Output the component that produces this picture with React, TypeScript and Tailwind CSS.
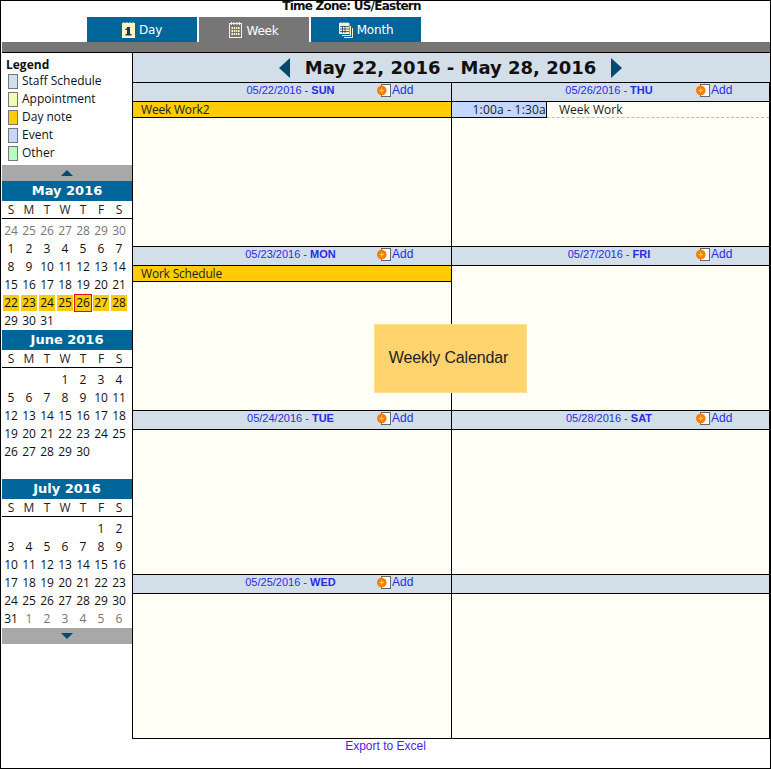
const font = "font-['Liberation_Sans',sans-serif]";

function AddIcon() {
  return (
    <svg width="14" height="14" viewBox="0 0 14 14" className="shrink-0">
      <rect x="4.500" y="1.500" width="9" height="12" fill="#fff" stroke="#666" />
      <circle cx="4.800" cy="7.500" r="4.800" fill="#f97c10" />
      <path d="M4.800 5.300v4.400M2.600 7.500h4.400" stroke="#ffd24a" strokeWidth="1" />
    </svg>
  );
}

function DayIcon() {
  return (
    <svg width="13" height="16" viewBox="0 0 13 16" className="shrink-0">
      <rect y="1" width="13" height="15" fill="#fdf3c4" />
      <path d="M2 0v2M5 0v2M8 0v2M11 0v2" stroke="#fdf3c4" />
      <path d="M5 5h3v8H5zM3.500 6.500H5V8H3.500zM3.500 12h6v1.500h-6z" fill="#1c3a50" />
    </svg>
  );
}

function WeekIcon() {
  return (
    <svg width="13" height="16" viewBox="0 0 13 16" className="shrink-0">
      <rect x=".5" y="1.500" width="12" height="14" fill="none" stroke="#fdf3c4" />
      <path d="M2.500 0v3M5 0v3M8 0v3M10.500 0v3" stroke="#fdf3c4" />
      <path d="M2.500 5h8v2h-8zM2.500 8h8v2h-8zM2.500 11h8v2h-8z" fill="#fdf3c4" />
      <path d="M4.500 5v8M6.500 5v8M8.500 5v8" stroke="#767676" strokeWidth=".8" />
    </svg>
  );
}

function MonthIcon() {
  return (
    <svg width="14" height="16" viewBox="0 0 14 16" className="shrink-0">
      <path d="M11.500 4v9.500H3M13.500 6v9.500H5" fill="none" stroke="#fdf3c4" />
      <rect x=".5" y="1.500" width="9.500" height="10" fill="#fdf3c4" stroke="#fdf3c4" />
      <path d="M2 0v2M5 0v2M8 0v2" stroke="#fdf3c4" />
      <path d="M1 4.500h9M1 7h9M1 9.500h9M3.500 4v7M6 4v7" stroke="#036" strokeWidth=".7" />
    </svg>
  );
}

function Tab({ label, active, icon }: { label: string; active?: boolean; icon: React.ReactNode }) {
  return (
    <div
      className={`flex h-[25px] w-[110px] items-center justify-center gap-[4px] text-[12px] tracking-[-0.2px] text-white font-['DejaVu_Sans',sans-serif] ${
        active ? 'bg-[#767676]' : 'bg-[#006699]'
      }`}
    >
      {icon}
      <span className={active ? 'pt-[2px]' : ''}>{label}</span>
    </div>
  );
}

const legend = [
  ['Staff Schedule', 'bg-[#d3dfe8]'],
  ['Appointment', 'bg-[#eeffb8]'],
  ['Day note', 'bg-[#ffcc05]'],
  ['Event', 'bg-[#c3d7ff]'],
  ['Other', 'bg-[#b4ffc0]'],
];

type D = { n: string; dim?: boolean; note?: boolean; today?: boolean };

function MiniMonth({ title, days, gap }: { title: string; days: D[]; gap?: boolean }) {
  return (
    <div>
      <div className="flex h-[20px] items-center justify-center bg-[#006699] pb-[1px] text-[13px] font-bold text-white font-['DejaVu_Sans',sans-serif]">
        {title}
      </div>
      <div className="grid h-[18px] grid-cols-[repeat(7,18px)] items-center justify-start border-b border-black text-center text-[12px] text-[#222] font-['Open_Sans',sans-serif]">
        {['S', 'M', 'T', 'W', 'T', 'F', 'S'].map((d, i) => (
          <span key={i}>{d}</span>
        ))}
      </div>
      <div className={`grid grid-cols-[repeat(7,18px)] content-start justify-start pt-[3px] text-center text-[12px] leading-[18px] ${gap ? 'h-[111px]' : ''} font-['Open_Sans',sans-serif]`}>
        {days.map((d, i) => (
          <div key={i} className="flex h-[18px] items-center justify-center">
            <span
              className={`flex h-[16px] w-[16px] items-center justify-center ${d.dim ? 'text-[#777]' : 'text-[#111]'} ${
                d.note ? 'bg-[#ffcc05]' : ''
              } ${d.today ? 'box-content border border-[#e01010]' : ''}`}
            >
              {d.n}
            </span>
          </div>
        ))}
      </div>
    </div>
  );
}

const range = (a: number, b: number, o: Partial<D> = {}): D[] =>
  Array.from({ length: b - a + 1 }, (_, i) => ({ n: String(a + i), ...o }));
const blank = (k: number): D[] => Array.from({ length: k }, () => ({ n: '' }));

const may: D[] = [
  ...range(24, 30, { dim: true }),
  ...range(1, 21),
  ...range(22, 25, { note: true }),
  { n: '26', note: true, today: true },
  ...range(27, 28, { note: true }),
  ...range(29, 31),
];
const june: D[] = [...blank(3), ...range(1, 30)];
const july: D[] = [...blank(5), ...range(1, 31), ...range(1, 6, { dim: true })];

function Scroller({ down }: { down?: boolean }) {
  return (
    <div className="flex h-[16px] items-center justify-center bg-[#a8a8a8]">
      <svg width="12" height="6" viewBox="0 0 12 6">
        <path d={down ? 'M0 0h12L6 6z' : 'M0 6h12L6 0z'} fill="#004a70" />
      </svg>
    </div>
  );
}

function DayCell({ date, day, children }: { date?: string; day?: string; children?: React.ReactNode }) {
  return (
    <div className="flex h-[164px] flex-col border-t border-black">
      <div className={`relative flex h-[19px] shrink-0 items-center justify-center border-b border-black bg-[#d3dfe8] pb-[4px] text-[11px] text-[#2a2ae8] ${font}`}>
        {date && (
          <>
            <span className="pr-[3px]">
              {date} - <b className="font-bold">{day}</b>
            </span>
            <span className="absolute left-[244px] top-0 flex h-[14px] items-center gap-[1px] text-[12px] text-[#2a2ae8]">
              <AddIcon />
              <span className="-mt-[1px]">Add</span>
            </span>
          </>
        )}
      </div>
      <div className="flex-1 bg-[#fffff5]">{children}</div>
    </div>
  );
}

function Note({ text }: { text: string }) {
  return (
    <div className="h-[16px] border-b border-black bg-[#ffcc05] pl-[8px] text-[12px] leading-[15px] tracking-[-0.2px] text-[#222] font-['Open_Sans',sans-serif]">
      {text}
    </div>
  );
}

export default function App() {
  return (
    <div className="relative h-[769px] w-[771px] overflow-hidden border border-black bg-white">
      <div className="h-[16px] pr-[68px] text-center text-[12px] font-bold leading-[10px] tracking-[-0.75px] text-[#111] font-['DejaVu_Sans',sans-serif]">
        Time Zone: US/Eastern
      </div>
      <div className="flex gap-[2px] pl-[86px]">
        <Tab label="Day" icon={<DayIcon />} />
        <Tab label="Week" active icon={<WeekIcon />} />
        <Tab label="Month" icon={<MonthIcon />} />
      </div>
      <div className="ml-[1px] h-[10px] bg-[#767676]" />
      <div className="ml-[1px] flex border-t border-black">
        <aside className="w-[130px] shrink-0 text-[#111] font-['Open_Sans',sans-serif]">
          <div className="h-[112px] pl-[4px] pt-[4px] text-[12px]">
            <div className="h-[15px] text-[12px] font-bold leading-[15px] text-[#111]">Legend</div>
            {legend.map(([t, c]) => (
              <div key={t} className="flex h-[18px] items-center gap-[4px] pl-[2px]">
                <span className={`h-[15px] w-[10px] border border-[#777] ${c}`} />
                <span>{t}</span>
              </div>
            ))}
          </div>
          <Scroller />
          <MiniMonth title="May 2016" days={may} />
          <MiniMonth title="June 2016" days={june} gap />
          <MiniMonth title="July 2016" days={july} />
          <Scroller down />
        </aside>
        <main className="flex-1 border-l border-black">
          <div className="flex h-[29px] items-center justify-center gap-[15px] bg-[#d3dfe8] pr-[2px]">
            <svg width="11" height="20" viewBox="0 0 11 20"><path d="M11 0v20L0 10z" fill="#004a70" /></svg>
            <span className="text-[18px] font-bold text-[#111] font-['DejaVu_Sans',sans-serif]">May 22, 2016 - May 28, 2016</span>
            <svg width="11" height="20" viewBox="0 0 11 20"><path d="M0 0v20L11 10z" fill="#004a70" /></svg>
          </div>
          <div className="grid w-[637px] grid-cols-[319px_317px] border-b border-r border-black">
            <div className="border-r border-black">
              <DayCell date="05/22/2016" day="SUN"><Note text="Week Work2" /></DayCell>
              <DayCell date="05/23/2016" day="MON"><Note text="Work Schedule" /></DayCell>
              <DayCell date="05/24/2016" day="TUE" />
              <DayCell date="05/25/2016" day="WED" />
            </div>
            <div>
              <DayCell date="05/26/2016" day="THU">
                <div className="flex h-[16px] border-b border-dashed border-[#bbb] text-[12px] leading-[15px] text-[#222] font-['Open_Sans',sans-serif]">
                  <div className="h-[16px] w-[95px] border-b border-r border-black bg-[#c3d7ff] text-right tracking-[0.2px]">1:00a - 1:30a</div>
                  <div className="pl-[12px]">Week Work</div>
                </div>
              </DayCell>
              <DayCell date="05/27/2016" day="FRI" />
              <DayCell date="05/28/2016" day="SAT" />
              <DayCell />
            </div>
          </div>
        </main>
      </div>
      <div className={`text-center text-[12px] leading-[15px] text-[#4a1ee8] ${font}`}>Export to Excel</div>
      <div className={`absolute left-[373px] top-[323px] flex h-[69px] w-[153px] items-center justify-center border border-[#ffdf94] bg-[#ffd36e] pb-[1px] pr-[4px] text-[16px] tracking-[-0.15px] text-[#222] ${font}`}>
        Weekly Calendar
      </div>
    </div>
  );
}
